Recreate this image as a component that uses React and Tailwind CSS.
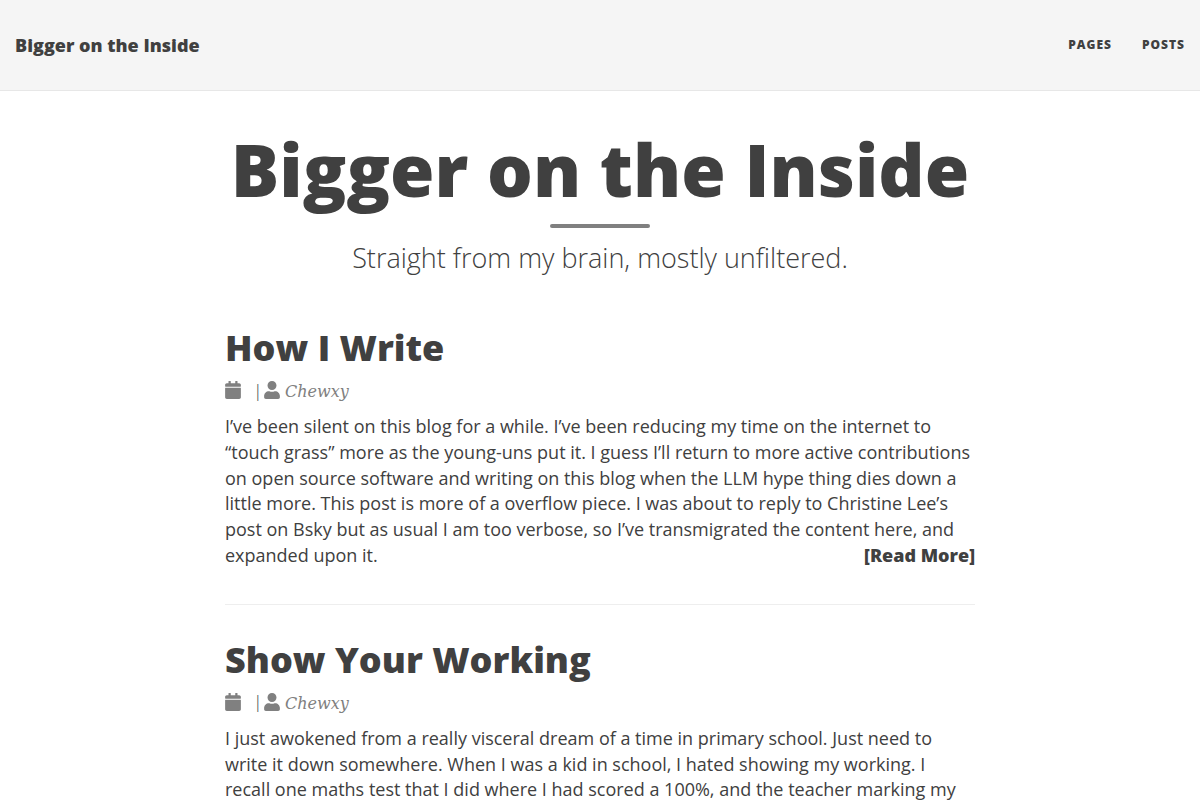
import React from "react";
import { FaCalendar, FaUser } from "react-icons/fa";

const Meta = () => (
  <div className="flex items-center h-[26px] text-[#808080] mt-[10px]">
    <FaCalendar className="w-[16px] h-[18px] mr-[14px] mb-[2px]" />
    <span className="font-['Liberation_Serif',serif] italic text-[18px] text-[#606060] mr-[4px]">|</span>
    <FaUser className="w-[16px] h-[18px] mr-[5px] mb-[2px]" />
    <span className="font-['DejaVu_Serif',serif] italic text-[16px] pt-[2px] leading-[24px]">Chewxy</span>
  </div>
);

const Post = ({ title, children, more, border }) => (
  <article className={border ? "border-b border-[#eeeeee] pb-[35px] mb-[35px]" : ""}>
    <h2 className="text-[36px] leading-[40px] font-extrabold text-[#404040]">{title}</h2>
    <Meta />
    <div className="text-[18px] leading-[25.8px] text-[#404040] mt-[10px]">
      {children}
      {more && <a className="float-right font-extrabold">[Read More]</a>}
    </div>
  </article>
);

export default function App() {
  return (
    <div className="h-[800px] overflow-hidden bg-white font-['Open_Sans',sans-serif] text-[#404040] antialiased">
      <nav className="h-[91px] bg-[#f5f5f5] border-b border-[#e7e7e7] flex items-center justify-between px-[15px]">
        <a className="text-[18px] font-extrabold text-[#404040]">Bigger on the Inside</a>
        <div className="flex gap-[30px] text-[12px] font-extrabold tracking-[1px] uppercase text-[#404040]">
          <a>Pages</a>
          <a>Posts</a>
        </div>
      </nav>
      <header className="flex flex-col items-center pt-[31px]">
        <h1 className="text-[72px] leading-[94px] font-extrabold text-[#404040]">Bigger on the Inside</h1>
        <hr className="w-[100px] h-[4px] rounded-[2px] bg-[#808080] border-0 mt-[8px]" />
        <p className="text-[27px] leading-[40px] font-light text-[#404040] mt-[10px]">Straight from my brain, mostly unfiltered.</p>
      </header>
      <main className="w-[750px] mx-auto mt-[50px]">
        <Post title="How I Write" more border>
          I’ve been silent on this blog for a while. I’ve been reducing my time on the internet to “touch grass” more as the young-uns put it. I guess I’ll return to more active contributions on open source software and writing on this blog when the LLM hype thing dies down a little more. This post is more of a overflow piece. I was about to reply to Christine Lee’s post on Bsky but as usual I am too verbose, so I’ve transmigrated the content here, and expanded upon it.
        </Post>
        <Post title="Show Your Working">
          I just awokened from a really visceral dream of a time in primary school. Just need to write it down somewhere. When I was a kid in school, I hated showing my working. I recall one maths test that I did where I had scored a 100%, and the teacher marking my
        </Post>
      </main>
    </div>
  );
}
